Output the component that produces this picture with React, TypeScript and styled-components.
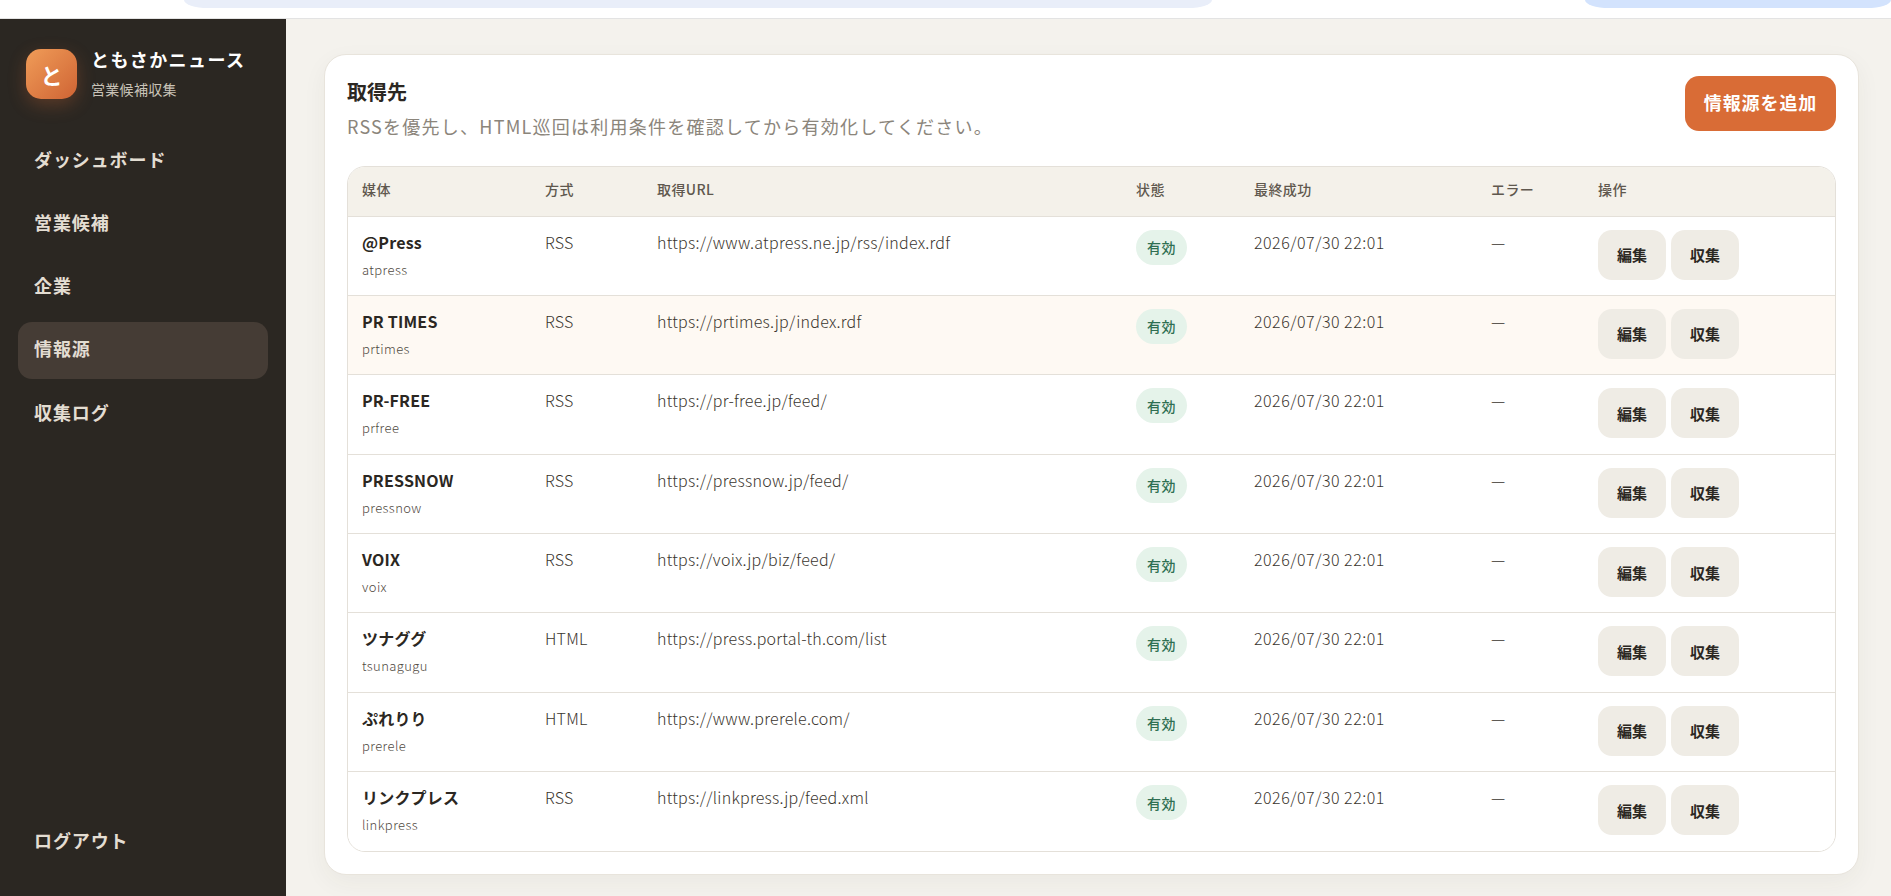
import { createGlobalStyle } from "styled-components";
import styled from "styled-components";

const GlobalStyle = createGlobalStyle`
  html, body {
    margin: 0;
    padding: 0;
    height: 100%;
    background: #f4f2ed;
    font-family: "Noto Sans CJK JP", "Noto Sans", sans-serif;
    color: #2b2722;
  }
  * { box-sizing: border-box; }
`;

const Page = styled.div`
  height: 896px;
  overflow: hidden;
  display: flex;
  flex-direction: column;
`;

const BrowserStrip = styled.div`
  height: 19px;
  flex: none;
  display: flex;
  align-items: flex-start;
  background: #fff;
  border-bottom: 1px solid #e3e3e3;
  padding-left: 184px;
`;

const StripPill = styled.div<{ $width: number; $gap: number; $color: string }>`
  width: ${(p) => p.$width}px;
  margin-right: ${(p) => p.$gap}px;
  height: 8px;
  background: ${(p) => p.$color};
  border-radius: 0 0 24px 24px / 0 0 8px 8px;
`;

const Shell = styled.div`
  flex: 1;
  min-height: 0;
  display: flex;
`;

const Sidebar = styled.aside`
  width: 286px;
  flex: none;
  background: #2b2722;
  padding: 30px 18px 26px;
  display: flex;
  flex-direction: column;
`;

const Brand = styled.div`
  display: flex;
  align-items: center;
  gap: 14px;
  padding: 0 8px;
  margin-bottom: 33px;
`;

const BrandMark = styled.div`
  width: 51px;
  height: 50px;
  border-radius: 15px;
  background: linear-gradient(135deg, #f09c58, #cf6434);
  box-shadow: 0 6px 18px rgba(217, 108, 54, 0.28);
  color: #fff;
  font-size: 22px;
  font-weight: 700;
  display: flex;
  align-items: center;
  justify-content: center;
`;

const BrandText = styled.div`
  display: flex;
  flex-direction: column;
  gap: 7px;
  margin-top: -3px;
`;

const BrandName = styled.div`
  color: #fff;
  font-size: 18px;
  line-height: 26px;
  font-weight: 700;
  letter-spacing: 1.4px;
  white-space: nowrap;
`;

const BrandSub = styled.div`
  color: #c9c3b8;
  font-size: 14px;
  line-height: 20px;
  letter-spacing: 0.3px;
`;

const NavList = styled.nav`
  display: flex;
  flex-direction: column;
  gap: 6.3px;
`;

const NavItem = styled.a<{ $active?: boolean }>`
  height: 57px;
  padding: 0 16px 4px;
  display: flex;
  align-items: center;
  border-radius: 14px;
  color: #e3ddd2;
  font-size: 18px;
  font-weight: 700;
  letter-spacing: 0.9px;
  background: ${(p) => (p.$active ? "#453c35" : "transparent")};
`;

const Logout = styled(NavItem)`
  margin-top: auto;
`;

const Main = styled.main`
  flex: 1;
  min-width: 0;
  padding: 35px 32px 0 38px;
`;

const Card = styled.section`
  background: #fff;
  border: 1px solid #e8e4dc;
  border-radius: 22px;
  box-shadow: 0 8px 24px rgba(60, 50, 30, 0.05);
  padding: 21px 22px 22px;
  height: 821px;
`;

const CardHead = styled.div`
  display: flex;
  justify-content: space-between;
  align-items: flex-start;
  height: 90px;
`;

const Title = styled.h2`
  margin: 2px 0 7px;
  font-size: 20px;
  line-height: 28px;
  font-weight: 700;
  color: #2b2722;
`;

const Subtitle = styled.p`
  margin: 0;
  font-size: 18px;
  line-height: 26px;
  color: #8b857b;
  letter-spacing: 1.25px;
`;

const PrimaryButton = styled.button`
  width: 151px;
  height: 55px;
  padding: 0 0 3px;
  border: none;
  border-radius: 14px;
  background: #d96c36;
  color: #fff;
  font-family: inherit;
  font-size: 18px;
  font-weight: 700;
  letter-spacing: 0.9px;
`;

const TableWrap = styled.div`
  border: 1px solid #e4e0d9;
  border-radius: 18px;
  overflow: hidden;
`;

const Table = styled.table`
  width: 100%;
  border-collapse: collapse;
  table-layout: fixed;
`;

const Th = styled.th<{ $width: number }>`
  width: ${(p) => p.$width}px;
  height: 49px;
  padding: 0 14px 4px;
  background: #f4f1ea;
  border-bottom: 1px solid #e4e0d9;
  text-align: left;
  font-size: 14px;
  font-weight: 500;
  color: #5f584e;
  letter-spacing: 0.4px;
`;

const Row = styled.tr<{ $hot?: boolean }>`
  background: ${(p) => (p.$hot ? "#fef9f3" : "#fff")};

  &:not(:last-child) td {
    border-bottom: 1px solid #e4e0d9;
  }
`;

const Td = styled.td<{ $spacing?: number }>`
  height: 79.4px;
  padding: 13px 14px 0;
  vertical-align: top;
  font-size: 16px;
  line-height: 24px;
  font-weight: 300;
  color: #3a352e;
  letter-spacing: ${(p) => p.$spacing ?? 0.25}px;
`;

const SourceName = styled.div`
  font-size: 16px;
  line-height: 24px;
  font-weight: 700;
  color: #2b2722;
  letter-spacing: 0.2px;
`;

const SourceKey = styled.div`
  margin-top: 6px;
  font-size: 13px;
  line-height: 20px;
  font-weight: 300;
  color: #4f4941;
  letter-spacing: 0.4px;
`;

const StatusBadge = styled.span`
  display: inline-flex;
  align-items: center;
  justify-content: center;
  width: 51px;
  height: 35px;
  border-radius: 18px;
  background: #e5f3ea;
  color: #2f6f52;
  font-size: 14px;
  font-weight: 500;
  letter-spacing: 0.5px;
`;

const ActionRow = styled.div`
  display: flex;
  gap: 5px;
`;

const ActionButton = styled.button`
  width: 68px;
  height: 50px;
  border: none;
  border-radius: 14px;
  background: #efece5;
  color: #2b2722;
  font-family: inherit;
  font-size: 15px;
  font-weight: 700;
`;

const navItems = ["ダッシュボード", "営業候補", "企業", "情報源", "収集ログ"];

const columns = [
  { label: "媒体", width: 183 },
  { label: "方式", width: 112 },
  { label: "取得URL", width: 479 },
  { label: "状態", width: 118 },
  { label: "最終成功", width: 237 },
  { label: "エラー", width: 107 },
  { label: "操作", width: 252 },
];

const sources = [
  { name: "@Press", key: "atpress", method: "RSS", url: "https://www.atpress.ne.jp/rss/index.rdf" },
  { name: "PR TIMES", key: "prtimes", method: "RSS", url: "https://prtimes.jp/index.rdf", hot: true },
  { name: "PR-FREE", key: "prfree", method: "RSS", url: "https://pr-free.jp/feed/" },
  { name: "PRESSNOW", key: "pressnow", method: "RSS", url: "https://pressnow.jp/feed/" },
  { name: "VOIX", key: "voix", method: "RSS", url: "https://voix.jp/biz/feed/" },
  { name: "ツナググ", key: "tsunagugu", method: "HTML", url: "https://press.portal-th.com/list" },
  { name: "ぷれりり", key: "prerele", method: "HTML", url: "https://www.prerele.com/" },
  { name: "リンクプレス", key: "linkpress", method: "RSS", url: "https://linkpress.jp/feed.xml" },
];

const App = () => {
  return (
    <Page>
      <GlobalStyle />
      <BrowserStrip>
        <StripPill $width={1028} $gap={373} $color="#e9eef9" />
        <StripPill $width={306} $gap={0} $color="#d3e3fd" />
      </BrowserStrip>
      <Shell>
        <Sidebar>
          <Brand>
            <BrandMark>と</BrandMark>
            <BrandText>
              <BrandName>ともさかニュース</BrandName>
              <BrandSub>営業候補収集</BrandSub>
            </BrandText>
          </Brand>
          <NavList>
            {navItems.map((item) => (
              <NavItem key={item} $active={item === "情報源"}>
                {item}
              </NavItem>
            ))}
          </NavList>
          <Logout>ログアウト</Logout>
        </Sidebar>
        <Main>
          <Card>
            <CardHead>
              <div>
                <Title>取得先</Title>
                <Subtitle>RSSを優先し、HTML巡回は利用条件を確認してから有効化してください。</Subtitle>
              </div>
              <PrimaryButton>情報源を追加</PrimaryButton>
            </CardHead>
            <TableWrap>
              <Table>
                <thead>
                  <tr>
                    {columns.map((col) => (
                      <Th key={col.label} $width={col.width}>
                        {col.label}
                      </Th>
                    ))}
                  </tr>
                </thead>
                <tbody>
                  {sources.map((source) => (
                    <Row key={source.key} $hot={source.hot}>
                      <Td>
                        <SourceName>{source.name}</SourceName>
                        <SourceKey>{source.key}</SourceKey>
                      </Td>
                      <Td>{source.method}</Td>
                      <Td>{source.url}</Td>
                      <Td>
                        <StatusBadge>有効</StatusBadge>
                      </Td>
                      <Td $spacing={0.5}>2026/07/30 22:01</Td>
                      <Td>—</Td>
                      <Td>
                        <ActionRow>
                          <ActionButton>編集</ActionButton>
                          <ActionButton>収集</ActionButton>
                        </ActionRow>
                      </Td>
                    </Row>
                  ))}
                </tbody>
              </Table>
            </TableWrap>
          </Card>
        </Main>
      </Shell>
    </Page>
  );
};

export default App;
